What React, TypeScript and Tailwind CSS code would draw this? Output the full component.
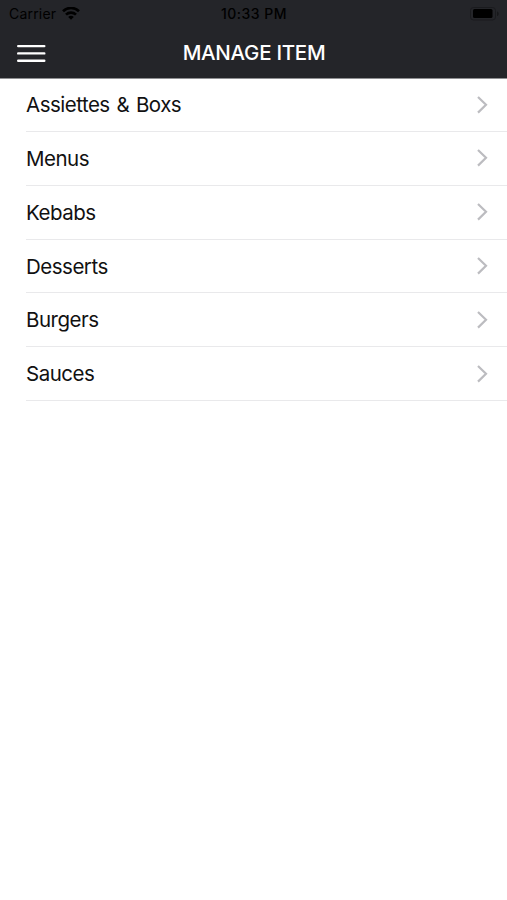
const categories = ['Assiettes & Boxs', 'Menus', 'Kebabs', 'Desserts', 'Burgers', 'Sauces'];

function WifiIcon() {
  return (
    <svg width="18" height="14" viewBox="0 0 18 14" fill="none" stroke="#000" strokeWidth="2.7">
      <path d="M1 4.2C5.5 -0.1 12.5 -0.1 17 4.2" />
      <path d="M4 7.6C6.8 4.9 11.2 4.9 14 7.6" />
      <path d="M9 12.7L6.2 9.9C7.8 8.5 10.2 8.5 11.8 9.9Z" fill="#000" stroke="none" />
    </svg>
  );
}

function BatteryIcon() {
  return (
    <svg width="30" height="14" viewBox="0 0 30 14">
      <rect x="0.5" y="0.5" width="25" height="12.5" rx="3" fill="none" stroke="#1a1b1e" />
      <rect x="3" y="2" width="19.5" height="9" rx="1.5" fill="#000" />
      <path d="M27 4.5C29.2 5 29.2 8.5 27 9Z" fill="#17181a" />
    </svg>
  );
}

function MenuIcon() {
  return (
    <svg width="29" height="19" viewBox="0 0 29 19" stroke="#fff" strokeWidth="2.4" strokeLinecap="round">
      <path d="M1.2 2.1H27.3M1.2 9.4H27.3M1.2 16.7H27.3" />
    </svg>
  );
}

function StatusBar() {
  return (
    <div className="grid h-[27px] grid-cols-3 items-center pl-[9px] pr-[7px] text-[14px] leading-[27px] text-black">
      <div className="flex items-center gap-[6px]">
        <span className="tracking-[0.2px]">Carrier</span>
        <WifiIcon />
      </div>
      <span className="pr-px text-center font-medium tracking-[0.5px]">10:33 PM</span>
      <div className="flex justify-end">
        <BatteryIcon />
      </div>
    </div>
  );
}

function NavBar() {
  return (
    <div className="grid h-[51px] grid-cols-[60px_1fr_60px] items-center">
      <button type="button" aria-label="Open menu" className="pt-px pl-[17px]">
        <MenuIcon />
      </button>
      <h1 className="pt-px pl-px text-center text-[20.5px] leading-[50px] font-medium tracking-[-0.28px] text-white">
        MANAGE ITEM
      </h1>
    </div>
  );
}

function CategoryRow({ name }: { name: string }) {
  return (
    <li className="ml-[26px] flex h-[53.8px] items-center justify-between border-b border-[#e9e9eb] pr-[19px]">
      <span className="pt-[2px] text-[20.5px] tracking-[-0.5px] [word-spacing:1.5px] text-[#111]">{name}</span>
      <svg width="12" height="18" viewBox="0 0 12 18" fill="none" stroke="#bcbcc0" strokeWidth="2.2">
        <path d="M2 1L10 8.8L2 16.6" />
      </svg>
    </li>
  );
}

export default function App() {
  return (
    <div className="min-h-screen bg-white font-['Inter','Liberation_Sans',sans-serif]">
      <header className="border-b border-[#8f9092] bg-[#242529]">
        <StatusBar />
        <NavBar />
      </header>
      <ul className="-mt-[0.8px]">
        {categories.map((name) => (
          <CategoryRow key={name} name={name} />
        ))}
      </ul>
    </div>
  );
}
